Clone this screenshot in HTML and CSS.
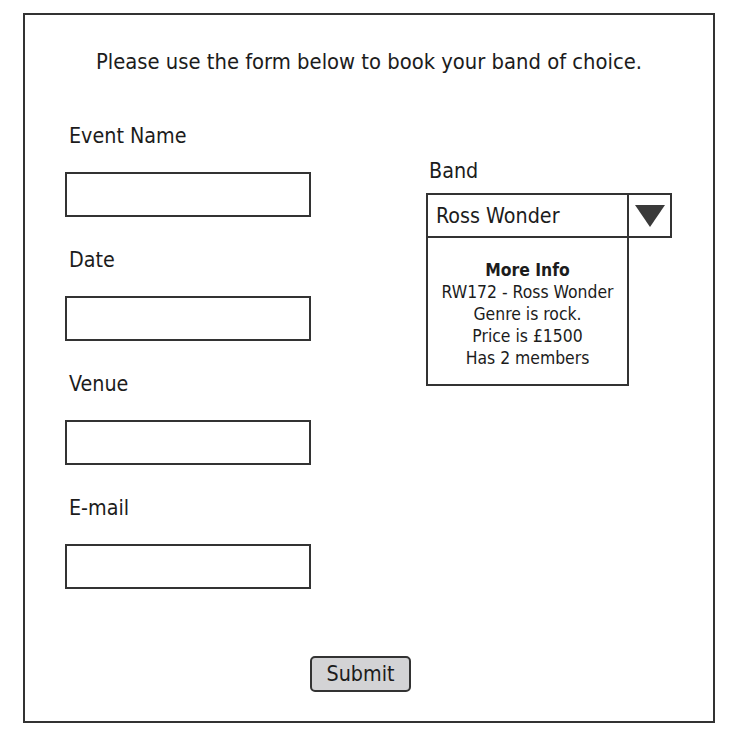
FILE: index.html
```html
<!DOCTYPE html>
<html>
<head>
<meta charset="utf-8">
<link rel="stylesheet" href="styles.css">
</head>
<body>
<div class="frame">
  <p class="intro">Please use the form below to book your band of choice.</p>
  <div class="columns">
    <div class="left">
      <div class="field">
        <div class="label">Event Name</div>
        <div class="input"></div>
      </div>
      <div class="field">
        <div class="label">Date</div>
        <div class="input"></div>
      </div>
      <div class="field">
        <div class="label">Venue</div>
        <div class="input"></div>
      </div>
      <div class="field">
        <div class="label">E-mail</div>
        <div class="input"></div>
      </div>
    </div>
    <div class="right">
      <div class="label">Band</div>
      <div class="select">
        <div class="select-value">Ross Wonder</div>
        <div class="select-arrow">
          <svg width="30" height="22" viewBox="0 0 30 22"><polygon points="0,0 30,0 15,22" fill="#3a3a3a"/></svg>
        </div>
      </div>
      <div class="info">
        <div class="info-title">More Info</div>
        <div>RW172 - Ross Wonder</div>
        <div>Genre is rock.</div>
        <div>Price is £1500</div>
        <div>Has 2 members</div>
      </div>
    </div>
  </div>
  <div class="actions">
    <div class="submit">Submit</div>
  </div>
</div>
</body>
</html>
```
FILE: styles.css
```css
html, body {
  margin: 0;
  padding: 0;
  background: #fff;
}
body {
  font-family: "DejaVu Sans Condensed", "DejaVu Sans", sans-serif;
  color: #1c1c1c;
}
.frame {
  box-sizing: border-box;
  margin: 13px 0 0 23px;
  width: 692px;
  height: 710px;
  border: 2px solid #333;
  padding: 35px 0 0 0;
  display: flex;
  flex-direction: column;
}
.intro {
  margin: 0;
  text-align: center;
  font-size: 21.8px;
  line-height: 24px;
}
.columns {
  display: flex;
  margin-top: 49px;
  padding-left: 40px;
}
.left {
  width: 246px;
  display: flex;
  flex-direction: column;
  gap: 30px;
}
.label {
  font-size: 21.3px;
  line-height: 24px;
  padding-left: 4px;
}
.field .label {
  padding-top: 1px;
  margin-bottom: 24px;
}
.input {
  box-sizing: border-box;
  height: 45px;
  border: 2px solid #333;
  background: #fff;
}
.right {
  margin-left: 115px;
  margin-top: 35px;
  display: flex;
  flex-direction: column;
}
.right .label {
  padding-top: 1px;
  margin-bottom: 10px;
  padding-left: 3px;
}
.select {
  display: flex;
  width: 246px;
  height: 45px;
  box-sizing: border-box;
  border: 2px solid #333;
}
.select-value {
  flex: 1;
  font-size: 21.3px;
  line-height: 41px;
  padding-left: 8px;
  border-right: 2px solid #333;
}
.select-arrow {
  width: 41px;
  display: flex;
  align-items: center;
  justify-content: center;
}
.info {
  box-sizing: border-box;
  width: 203px;
  height: 150px;
  margin-top: -2px;
  border: 2px solid #333;
  padding-top: 21px;
  text-align: center;
  font-size: 17.4px;
  line-height: 22px;
}
.info-title {
  font-weight: bold;
}
.actions {
  margin-top: auto;
  margin-bottom: 29px;
  padding-left: 285px;
  display: flex;
}
.submit {
  box-sizing: border-box;
  width: 101px;
  height: 36px;
  border: 2px solid #333;
  border-radius: 5px;
  background: #d3d3d5;
  font-size: 21.3px;
  line-height: 32px;
  text-align: center;
}
```
